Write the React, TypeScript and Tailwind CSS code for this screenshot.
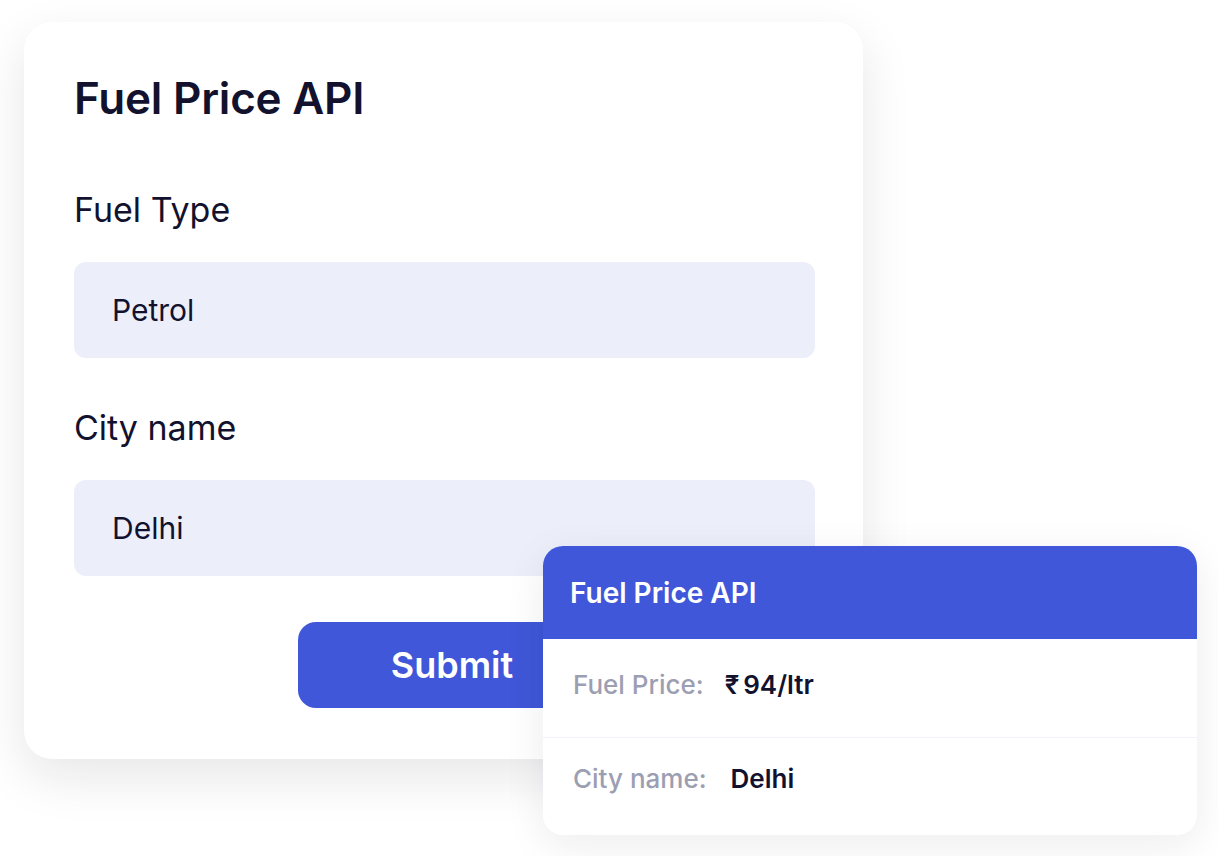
import React from "react";

export default function App() {
  return (
    <div
      className="relative h-[856px] w-[1218px] overflow-hidden bg-white"
      style={{ fontFamily: "Inter, 'Noto Sans', sans-serif" }}
    >
      {/* Request form card */}
      <div className="ml-[24px] mt-[22px] h-[737px] w-[839px] rounded-[28px] bg-white pl-[50px] pr-[48px] pt-[50px] shadow-[0_18px_50px_rgba(20,20,40,0.10)]">
        <h1 className="text-[44px] font-semibold leading-[52px] tracking-[-0.2px] text-[#12122e]">
          Fuel Price API
        </h1>

        <label className="mt-[66px] block text-[34px] leading-[40px] text-[#12122e]">
          Fuel Type
        </label>
        <div className="mt-[32px] flex h-[96px] items-center rounded-[12px] bg-[#eceefa] pl-[38px] text-[30px] text-[#12122e]">
          Petrol
        </div>

        <label className="mt-[50px] block text-[34px] leading-[40px] text-[#12122e]">
          City name
        </label>
        <div className="mt-[32px] flex h-[96px] items-center rounded-[12px] bg-[#eceefa] pl-[38px] text-[30px] text-[#12122e]">
          Delhi
        </div>

        <button
          type="button"
          className="ml-[224px] mt-[46px] flex h-[86px] w-[308px] items-center justify-center rounded-[18px] bg-[#3f57d8] text-[36px] font-semibold text-white"
        >
          Submit
        </button>
      </div>

      {/* Response card, lying over the form */}
      <div className="absolute left-[543px] top-[546px] w-[654px] overflow-hidden rounded-[20px] bg-white shadow-[0_10px_40px_rgba(20,20,40,0.08)]">
        <div className="flex h-[93px] items-center bg-[#3f57d8] px-[27px] text-[28px] font-semibold text-white">
          Fuel Price API
        </div>
        <div className="flex h-[98px] items-center px-[30px] pb-[8px] text-[26px]">
          <span className="font-medium text-[#9c9eb2]">Fuel Price:</span>
          <span className="ml-[21px] font-semibold text-[#12122e]">
            <span className="mr-[4px]">₹</span>94/ltr
          </span>
        </div>
        <div className="h-px bg-[#f1f2fa]" />
        <div className="flex h-[97px] items-center px-[30px] pb-[16px] text-[26px]">
          <span className="font-medium text-[#9c9eb2]">City name:</span>
          <span className="ml-[24px] font-semibold text-[#12122e]">Delhi</span>
        </div>
      </div>
    </div>
  );
}
